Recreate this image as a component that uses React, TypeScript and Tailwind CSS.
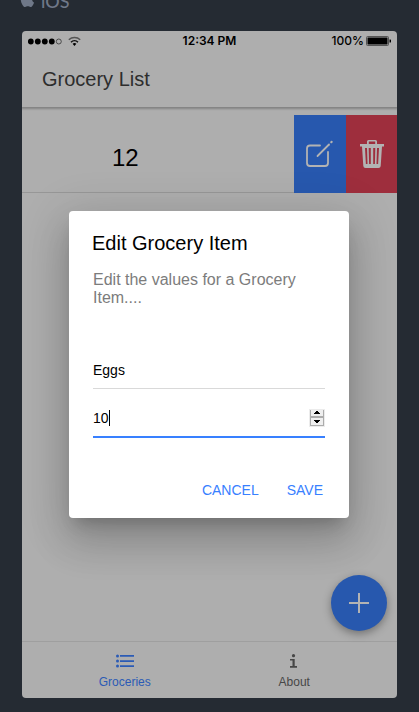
import { useState } from "react";
import type { ReactNode } from "react";

function StatusBar() {
  return (
    <div className="relative flex h-5 items-center justify-between px-1.5 font-['Inter',sans-serif] text-xs leading-5 font-medium text-black">
      <div className="flex items-center">
        <svg width="58" height="12" viewBox="0 0 58 12" aria-label="Signal strength">
          <circle cx="2.800" cy="6.500" r="2.900" />
          <circle cx="9.800" cy="6.500" r="2.900" />
          <circle cx="16.800" cy="6.500" r="2.900" />
          <circle cx="23.800" cy="6.500" r="2.900" />
          <circle cx="30.800" cy="6.500" r="2.500" fill="none" stroke="#333" strokeWidth="0.8" />
          <g fill="none" stroke="#111" strokeWidth="1.500">
            <path d="M40.800 4.800a8.300 8.300 0 0 1 11.400 0" stroke="#555" />
            <path d="M43 7.200a5 5 0 0 1 7 0" />
          </g>
          <path d="M44.600 8.800a2.800 2.800 0 0 1 3.800 0L46.500 11z" />
        </svg>
      </div>
      <span className="absolute inset-x-0 text-center font-semibold">12:34 PM</span>
      <div className="flex items-center gap-0.5">
        <span>100%</span>
        <svg width="25" height="10" viewBox="0 0 25 10" aria-label="Battery">
          <rect x="0.500" y="0.500" width="22" height="9" rx="1" fill="none" stroke="#555" />
          <rect x="1.500" y="1.500" width="20" height="7" />
          <path d="M23.500 3.500h.6a1 1 0 0 1 0 3h-.6z" />
        </svg>
      </div>
    </div>
  );
}

function TabButton({ label, active, children }: { label: string; active?: boolean; children: ReactNode }) {
  return (
    <button
      type="button"
      className={`flex flex-1 flex-col items-center pt-[11px] text-xs leading-4 ${active ? "text-[#2b5bb5]" : "text-[#474747]"}`}
    >
      {children}
      <span className="mt-[5px]">{label}</span>
    </button>
  );
}

function EditDialog() {
  const [name, setName] = useState("Eggs");
  const [quantity, setQuantity] = useState(10);
  return (
    <div className="absolute inset-0 z-10 flex items-center justify-center pr-px">
      <form
        role="dialog"
        aria-labelledby="dialog-title"
        onSubmit={(e) => e.preventDefault()}
        className="w-[280px] rounded-sm bg-white shadow-[0_11px_15px_-7px_rgba(0,0,0,0.2),0_24px_38px_3px_rgba(0,0,0,0.14),0_9px_46px_8px_rgba(0,0,0,0.12)]"
      >
        <div className="px-6 pt-5">
          <h2 id="dialog-title" className="-ml-px text-xl leading-6 text-black">Edit Grocery Item</h2>
          <p className="mt-4 text-base leading-[18px] text-[#7c7c7c]">Edit the values for a Grocery Item....</p>
        </div>
        <div className="px-6 pt-11">
          <input
            aria-label="Item name"
            value={name}
            onChange={(e) => setName(e.target.value)}
            className="block h-[38px] w-full border-b border-[#d9d9d9] text-sm text-black outline-none"
          />
          <div className="relative mt-2.5 flex h-[39px] items-center border-b-2 border-[#3880ff]">
            <input
              aria-label="Quantity"
              inputMode="numeric"
              value={quantity}
              onChange={(e) => setQuantity(Number(e.target.value) || 0)}
              className="h-full min-w-0 flex-1 text-sm text-black outline-none"
            />
            <span className="absolute left-4 h-4 w-px bg-black" />
            <div className="flex h-[18px] w-4 flex-col gap-0.5 border border-[#ececec] bg-[#acacac] px-px pb-px">
              <button type="button" aria-label="Increase" onClick={() => setQuantity(quantity + 1)} className="flex flex-1 items-center justify-center bg-[#efefef]">
                <svg width="6" height="3" viewBox="0 0 6 3" shapeRendering="crispEdges"><path d="M2 0h2v1h1v1h1v1H0V2h1V1h1z" /></svg>
              </button>
              <button type="button" aria-label="Decrease" onClick={() => setQuantity(quantity - 1)} className="flex flex-1 items-center justify-center bg-[#efefef]">
                <svg width="6" height="3" viewBox="0 0 6 3" shapeRendering="crispEdges"><path d="M0 0h6v1H5v1H4v1H2V2H1V1H0z" /></svg>
              </button>
            </div>
          </div>
        </div>
        <div className="flex justify-end gap-2 px-4 pt-[34px] pb-2.5 text-sm leading-9 text-[#3880ff]">
          <button type="button" className="px-2.5">CANCEL</button>
          <button type="submit" className="px-2.5">SAVE</button>
        </div>
      </form>
    </div>
  );
}

export default function App() {
  return (
    <div className="flex min-h-screen flex-col overflow-hidden bg-[#252b33] px-[22px] pb-3.5 font-['Liberation_Sans',Arial,sans-serif]">
      <div className="-mt-3 flex h-[43px] items-start gap-1.5 text-[#6f7888]">
        <svg className="-ml-1" width="17" height="20" viewBox="0 0 17 20" fill="currentColor" aria-hidden="true">
          <path transform="translate(0 1.500)" d="M14 9.500c0-2 1.500-3 1.700-3.100-1-1.400-2.400-1.600-3-1.600-1.300-.1-2.500.8-3.100.8S8 4.800 6.900 4.800C5.500 4.800 4.200 5.600 3.500 6.900c-1.500 2.600-.4 6.400 1 8.500.7 1 1.500 2.100 2.600 2.100 1.100 0 1.500-.7 2.700-.7s1.600.7 2.700.7 1.800-1 2.500-2.100c.8-1.200 1.100-2.300 1.100-2.400 0 0-2.100-.8-2.100-3.500z" />
        </svg>
        <span className="font-['Lato',sans-serif] text-lg leading-[26px] font-medium">iOS</span>
      </div>

      <div className="relative flex flex-1 flex-col overflow-hidden rounded-sm bg-[#aeaeae]">
        <header className="shadow-[0_1px_2px_1px_rgba(0,0,0,0.25)]">
          <StatusBar />
          <h1 className="px-5 text-xl leading-[56px] text-[#2d2d2d]">Grocery List</h1>
        </header>

        <main className="flex-1 pt-2">
          <div className="flex h-[78px]">
            <div className="flex flex-1 items-center border-b border-[#979797] pt-2 pl-[90px] text-2xl text-black">12</div>
            <button type="button" aria-label="Edit" className="flex w-[52px] items-center justify-center bg-[#2758ae] text-[#b3b3b3]">
              <svg width="28" height="28" viewBox="1 0 28 28" fill="none" stroke="currentColor" strokeWidth="1.800" strokeLinecap="round">
                <path d="M15 5.500H5a3 3 0 0 0-3 3V23a3 3 0 0 0 3 3h15a3 3 0 0 0 3-3V12" />
                <path d="M12.500 16 24 4.500" />
                <path d="m26.300 2.200.3-.3" strokeWidth="2.200" />
              </svg>
            </button>
            <button type="button" aria-label="Delete" className="flex w-[51px] items-center justify-center bg-[#9e2e3d] text-[#b3b3b3]">
              <svg width="24" height="28" viewBox="0 0 24 28" fill="currentColor" fillRule="evenodd">
                <path d="M7 4V1.500Q7 0 8.500 0h7Q17 0 17 1.500V4h7v2.500h-2L20.700 26q-.2 2-2.200 2h-13q-2 0-2.200-2L2 6.500H0V4zM8.800 4h6.400V1.600H8.800zM5 8l.9 16h1.600L7 8zM8.700 8l.4 16h1.700V8zM13.200 8v16h1.700l.4-16zM17 8l-.5 16h1.600L19 8z" />
              </svg>
            </button>
          </div>
        </main>

        <button type="button" aria-label="Add item" className="absolute right-2.5 bottom-[67px] flex size-14 items-center justify-center rounded-full bg-[#2758ae] shadow-[0_3px_8px_rgba(0,0,0,0.35)]">
          <svg width="20" height="20" viewBox="0 0 20 20" stroke="#b3b3b3" strokeWidth="2"><path d="M10 0v20M0 10h20" /></svg>
        </button>

        <nav className="flex h-[57px] border-t border-[#9f9f9f] pr-[18px] pl-[18px]">
          <TabButton label="Groceries" active>
            <svg width="18" height="16" viewBox="0 0 18 16" fill="currentColor">
              <circle cx="1.500" cy="3" r="1.500" /><circle cx="1.500" cy="8" r="1.500" /><circle cx="1.500" cy="13" r="1.500" />
              <path d="M4 2h14v1.700H4zM4 7.200h14v1.700H4zM4 12.200h14v1.700H4z" />
            </svg>
          </TabButton>
          <TabButton label="About">
            <svg width="18" height="16" viewBox="0 0 18 16" fill="currentColor">
              <circle cx="8.500" cy="2.700" r="1.600" />
              <path d="M5 6H9.700v7H12v1.800H5V13H7.500V7.600H5z" />
            </svg>
          </TabButton>
        </nav>
        <EditDialog />
      </div>
    </div>
  );
}
